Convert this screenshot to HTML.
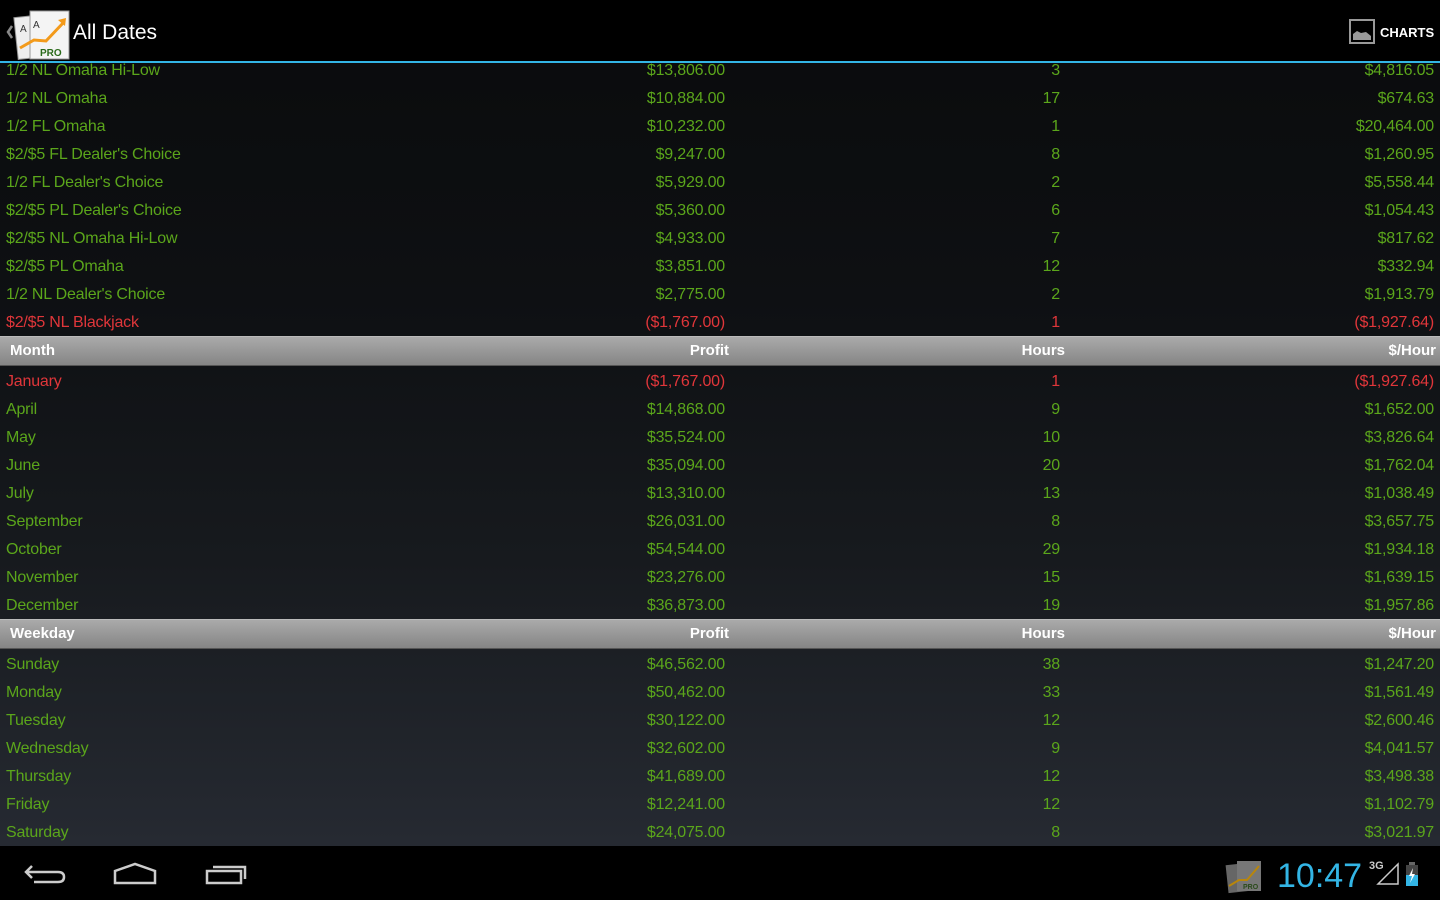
<!DOCTYPE html>
<html><head><meta charset="utf-8"><style>
*{margin:0;padding:0;box-sizing:border-box}
body{width:1440px;height:900px;overflow:hidden;font-family:"Liberation Sans",sans-serif;background:linear-gradient(#0a0b0c 0px,#0e1013 300px,#171a1e 560px,#262a32 846px);position:relative}
.ab{position:absolute;left:0;top:0;width:1440px;height:63px;background:#000;border-bottom:2px solid #33b5e5}
.r{position:absolute;left:0;width:1440px;height:28px;font-size:16px;color:#5ba61b;letter-spacing:-0.2px}
.r span{position:absolute;top:6px;white-space:nowrap}
.r .a{left:6px}.r .b{right:715px}.r .c{right:380px}.r .d{right:6px}
.red{color:#e0363a}
.h{position:absolute;left:0;width:1440px;height:30px;background:linear-gradient(#aaa,#858585);border-top:1px solid #bbb;border-bottom:1px solid #555;color:#fff;font-weight:bold;font-size:15px}
.h span{position:absolute;top:5px}
.h .a{left:10px}.h .b{right:711px}.h .c{right:375px}.h .d{right:4px}
.nav{position:absolute;left:0;top:846px;width:1440px;height:54px;background:#000}
</style></head><body>
<div id="rows"></div>
<div class="ab">
<svg style="position:absolute;left:2px;top:8px" width="70" height="52" viewBox="0 0 70 52">
<path d="M10 18 L6 24 L10 30" stroke="#888" stroke-width="2.5" fill="none"/>
<rect x="14" y="8" width="30" height="42" fill="#eee" stroke="#999" transform="rotate(-6 29 29)"/>
<rect x="28" y="3" width="39" height="48" fill="#f4f4f4" stroke="#999"/>
<text x="18" y="24" font-size="10" fill="#333">A</text><text x="31" y="20" font-size="10" fill="#333">A</text>
<path d="M18 40 L32 32 L44 33 L62 14" stroke="#f39a1a" stroke-width="3" fill="none"/>
<path d="M56 12 L64 10 L63 18Z" fill="#f39a1a"/>
<text x="38" y="48" font-size="10" font-weight="bold" fill="#2a6a1a">PRO</text>
</svg>
<div style="position:absolute;left:73px;top:21px;color:#fff;font-size:21px">All Dates</div>
<svg style="position:absolute;left:1349px;top:19px" width="26" height="25"><rect x="1" y="1" width="24" height="23" fill="none" stroke="#999" stroke-width="2"/><path d="M4 21 L4 15 L8 12 L12 14 L17 13 L22 17 L22 21Z" fill="#999"/></svg>
<div style="position:absolute;left:1380px;top:25px;color:#fff;font-size:13px;font-weight:bold">CHARTS</div>
</div>
<div class="h" style="top:336px"><span class="a">Month</span><span class="b">Profit</span><span class="c">Hours</span><span class="d">$/Hour</span></div>
<div class="h" style="top:619px"><span class="a">Weekday</span><span class="b">Profit</span><span class="c">Hours</span><span class="d">$/Hour</span></div>
<div class="nav">
<svg style="position:absolute;left:20px;top:14px" width="50" height="30"><path d="M12 6 L6 12 L12 18 M6 12 L38 12 Q44 12 44 17 Q44 22 38 22 L14 22" stroke="#ccc" stroke-width="2.5" fill="none"/></svg>
<svg style="position:absolute;left:112px;top:15px" width="46" height="26"><path d="M3 22 L3 10 L23 3 L43 10 L43 22Z" stroke="#ccc" stroke-width="2.5" fill="none"/></svg>
<svg style="position:absolute;left:204px;top:15px" width="46" height="26"><rect x="3" y="10" width="34" height="12" stroke="#ccc" stroke-width="2.5" fill="none"/><path d="M9 6 L41 6 L41 18" stroke="#ccc" stroke-width="2.5" fill="none"/></svg>
<svg style="position:absolute;left:1225px;top:12px" width="38" height="36"><rect x="2" y="6" width="22" height="28" fill="#666" transform="rotate(-6 13 20)"/><rect x="12" y="3" width="24" height="30" fill="#777"/><path d="M4 28 L14 22 L22 22 L34 8" stroke="#b8860b" stroke-width="2" fill="none"/><text x="18" y="31" font-size="7" font-weight="bold" fill="#2a4a1a">PRO</text></svg>
<div style="position:absolute;left:1277px;top:11px;color:#33b5e5;font-size:34px">10:47</div>
<div style="position:absolute;left:1369px;top:14px;color:#ccc;font-size:11px;font-weight:bold">3G</div>
<svg style="position:absolute;left:1376px;top:16px" width="24" height="24"><path d="M2 22 L22 2 L22 22Z" stroke="#ccc" stroke-width="1.5" fill="none"/></svg>
<svg style="position:absolute;left:1404px;top:15px" width="16" height="26"><rect x="5" y="1" width="6" height="3" fill="#666"/><rect x="2" y="4" width="12" height="21" fill="#444"/><rect x="2" y="14" width="12" height="11" fill="#33b5e5"/><path d="M9 7 L5 15 L8 15 L6 22 L11 13 L8 13Z" fill="#fff"/></svg>
</div>
<script>
var g=[
["1/2 NL Omaha Hi-Low","$13,806.00","3","$4,816.05"],
["1/2 NL Omaha","$10,884.00","17","$674.63"],
["1/2 FL Omaha","$10,232.00","1","$20,464.00"],
["$2/$5 FL Dealer's Choice","$9,247.00","8","$1,260.95"],
["1/2 FL Dealer's Choice","$5,929.00","2","$5,558.44"],
["$2/$5 PL Dealer's Choice","$5,360.00","6","$1,054.43"],
["$2/$5 NL Omaha Hi-Low","$4,933.00","7","$817.62"],
["$2/$5 PL Omaha","$3,851.00","12","$332.94"],
["1/2 NL Dealer's Choice","$2,775.00","2","$1,913.79"],
["$2/$5 NL Blackjack","($1,767.00)","1","($1,927.64)",1]];
var m=[["January","($1,767.00)","1","($1,927.64)",1],["April","$14,868.00","9","$1,652.00"],["May","$35,524.00","10","$3,826.64"],["June","$35,094.00","20","$1,762.04"],["July","$13,310.00","13","$1,038.49"],["September","$26,031.00","8","$3,657.75"],["October","$54,544.00","29","$1,934.18"],["November","$23,276.00","15","$1,639.15"],["December","$36,873.00","19","$1,957.86"]];
var w=[["Sunday","$46,562.00","38","$1,247.20"],["Monday","$50,462.00","33","$1,561.49"],["Tuesday","$30,122.00","12","$2,600.46"],["Wednesday","$32,602.00","9","$4,041.57"],["Thursday","$41,689.00","12","$3,498.38"],["Friday","$12,241.00","12","$1,102.79"],["Saturday","$24,075.00","8","$3,021.97"]];
var h="";
function add(a,t){a.forEach(function(r,i){h+='<div class="r'+(r[4]?' red':'')+'" style="top:'+(t+i*28)+'px"><span class="a">'+r[0]+'</span><span class="b">'+r[1]+'</span><span class="c">'+r[2]+'</span><span class="d">'+r[3]+'</span></div>';});}
add(g,56);add(m,367);add(w,650);
document.getElementById("rows").innerHTML=h;
</script>
</body></html>
